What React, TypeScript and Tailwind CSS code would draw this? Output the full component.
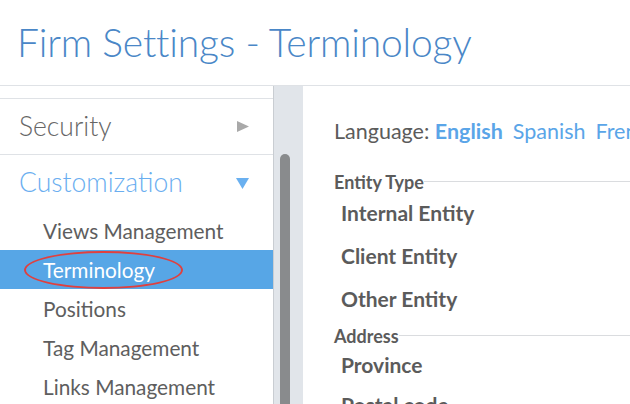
import React from 'react';

const subItems = ['Views Management', 'Terminology', 'Positions', 'Tag Management', 'Links Management'];

const App: React.FC = () => {
  return (
    <div className="w-[630px] h-[404px] overflow-hidden bg-white font-['Lato',_'Liberation_Sans',_sans-serif] text-[#5b5b5b]">
      <div className="h-[86px] border-b border-[#dfe2e6] pl-[17px] pt-[18px]">
        <h1 className="text-[39px] leading-[48px] font-light text-[#4a87c7] tracking-[-0.2px]">Firm Settings - Terminology</h1>
      </div>

      <div className="flex h-[318px]">
        {/* sidebar */}
        <div className="w-[273px] shrink-0 pt-[12px]">
          <div className="border-t border-b border-[#dfe2e6] h-[57px] flex items-center justify-between pl-[19px] pr-[24px]">
            <span className="text-[26.5px] font-light text-[#666]">Security</span>
            <svg width="12" height="11" viewBox="0 0 12 11">
              <path d="M0 0 L12 5.5 L0 11 Z" fill="#a9a9a9" />
            </svg>
          </div>
          <div className="h-[56px] flex items-center justify-between pl-[19px] pr-[24px]">
            <span className="text-[26.5px] font-light text-[#6aaef0]">Customization</span>
            <svg width="13" height="11" viewBox="0 0 13 11">
              <path d="M0 0 L13 0 L6.5 11 Z" fill="#6ab0f0" />
            </svg>
          </div>
          <div className="flex flex-col">
            {subItems.map((item) => (
              <div
                key={item}
                className={`relative h-[39px] flex items-center pl-[43px] text-[20.8px] whitespace-nowrap ${
                  item === 'Terminology' ? 'bg-[#57a6e6] text-white' : 'text-[#5e5e5e]'
                }`}
              >
                {item}
                {item === 'Terminology' && (
                  <div className="absolute left-[24px] top-[1px] w-[159px] h-[38px] rounded-[50%] border-2 border-[#e0403f]" />
                )}
              </div>
            ))}
          </div>
        </div>

        {/* scrollbar */}
        <div className="w-[30px] shrink-0 bg-[#e1e5ea] border-l border-[#c9cdd2] pt-[68px] pl-[6px] pr-[13px] flex flex-col">
          <div className="flex-1 bg-[#898b8d] rounded-t-full" />
        </div>

        {/* content */}
        <div className="flex-1 min-w-0 pl-[31px] pt-[33px] overflow-hidden">
          <div className="h-[24px] flex items-center gap-[10px] text-[21.5px] whitespace-nowrap">
            <span>
              Language: <span className="font-bold text-[#5aa5e8]">English</span>
            </span>
            <span className="text-[#5aa5e8]">Spanish</span>
            <span className="text-[#5aa5e8]">French</span>
          </div>

          <div className="mt-[30px] h-[18px] flex items-center">
            <span className="text-[18px] font-bold text-[#5b5b5b] whitespace-nowrap">Entity Type</span>
            <div className="flex-1 h-px bg-[#dadcdf] -mt-[2px]" />
          </div>
          <div className="pl-[7px] flex flex-col">
            {['Internal Entity', 'Client Entity', 'Other Entity'].map((t) => (
              <div key={t} className="h-[43px] flex items-center text-[21px] font-bold text-[#5b5b5b] whitespace-nowrap">
                {t}
              </div>
            ))}
          </div>

          <div className="mt-[7px] h-[18px] flex items-center">
            <span className="text-[18px] font-bold text-[#5b5b5b]">Address</span>
            <div className="flex-1 h-px bg-[#dadcdf] -mt-[2px]" />
          </div>
          <div className="pl-[7px] flex flex-col">
            {['Province', 'Postal code'].map((t) => (
              <div key={t} className="h-[40px] flex items-center text-[21px] font-bold text-[#5b5b5b] whitespace-nowrap">
                {t}
              </div>
            ))}
          </div>
        </div>
      </div>
    </div>
  );
};

export default App;
